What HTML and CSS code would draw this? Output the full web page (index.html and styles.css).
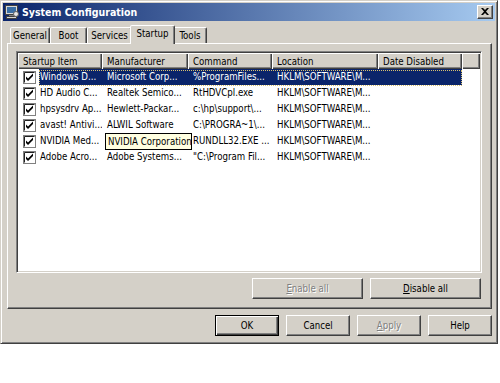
FILE: index.html
```html
<!DOCTYPE html>
<html lang="en">
<head>
  <meta charset="UTF-8" />
  <title>System Configuration</title>
  <link rel="stylesheet" href="styles.css">
</head>
<body>
  <!-- shared checkbox glyph -->
  <svg class="defs" width="0" height="0">
    <symbol id="chk" viewBox="0 0 13 13">
      <rect x="0.5" y="0.5" width="12" height="12" fill="#fff" stroke="#808080"/>
      <path d="M1.5 11.5V1.5H11.5" stroke="#202020" fill="none"/>
      <path d="M3 5.5l2 2 5-5v2.5l-5 5-2-2z" fill="#000"/>
    </symbol>
  </svg>

  <div class="window">
    <div class="titlebar">
      <svg class="app-icon" width="16" height="16" viewBox="0 0 16 16">
        <rect x="1.5" y="1.5" width="12" height="9" fill="#d8d8d8" stroke="#404040"/>
        <rect x="3" y="3" width="9" height="6" fill="#3a6ea5"/>
        <rect x="5" y="11" width="5" height="2" fill="#808080"/>
        <rect x="2.5" y="12.5" width="10" height="2" fill="#d8d8d8" stroke="#404040"/>
        <circle cx="12" cy="10" r="2.5" fill="#e8e8e8" stroke="#606060"/>
      </svg>
      <span class="title">System Configuration</span>
      <div class="close">
        <svg width="8" height="7" viewBox="0 0 8 7">
          <path d="M0 0h2l2 2 2-2h2L5 3.5 8 7H6L4 5 2 7H0l3-3.5z" fill="#000"/>
        </svg>
      </div>
    </div>

    <div class="body">
      <div class="tabs">
        <div class="tab w-general">General</div>
        <div class="tab w-boot">Boot</div>
        <div class="tab w-services">Services</div>
        <div class="tab active w-startup">Startup</div>
        <div class="tab w-tools">Tools</div>
      </div>

      <div class="panel">
        <div class="listview">
          <table>
            <colgroup>
              <col class="c1"><col class="c2"><col class="c3"><col class="c4"><col class="c5"><col>
            </colgroup>
            <thead>
              <tr>
                <th>Startup Item</th>
                <th>Manufacturer</th>
                <th>Command</th>
                <th>Location</th>
                <th>Date Disabled</th>
                <th></th>
              </tr>
            </thead>
            <tbody>
              <tr class="selected">
                <td class="item"><svg class="box"><use href="#chk"/></svg><span class="label">Windows D...</span></td>
                <td>Microsoft Corp...</td>
                <td>%ProgramFiles...</td>
                <td>HKLM\SOFTWARE\M...</td>
                <td></td>
                <td class="filler"></td>
              </tr>
              <tr>
                <td class="item"><svg class="box"><use href="#chk"/></svg><span class="label">HD Audio C...</span></td>
                <td>Realtek Semico...</td>
                <td>RtHDVCpl.exe</td>
                <td>HKLM\SOFTWARE\M...</td>
                <td></td>
                <td></td>
              </tr>
              <tr>
                <td class="item"><svg class="box"><use href="#chk"/></svg><span class="label">hpsysdrv Ap...</span></td>
                <td>Hewlett-Packar...</td>
                <td>c:\hp\support\...</td>
                <td>HKLM\SOFTWARE\M...</td>
                <td></td>
                <td></td>
              </tr>
              <tr>
                <td class="item"><svg class="box"><use href="#chk"/></svg><span class="label">avast! Antivi...</span></td>
                <td>ALWIL Software</td>
                <td>C:\PROGRA~1\...</td>
                <td>HKLM\SOFTWARE\M...</td>
                <td></td>
                <td></td>
              </tr>
              <tr>
                <td class="item"><svg class="box"><use href="#chk"/></svg><span class="label">NVIDIA Med...</span></td>
                <td></td>
                <td>RUNDLL32.EXE ...</td>
                <td>HKLM\SOFTWARE\M...</td>
                <td></td>
                <td></td>
              </tr>
              <tr>
                <td class="item"><svg class="box"><use href="#chk"/></svg><span class="label">Adobe Acro...</span></td>
                <td>Adobe Systems...</td>
                <td>"C:\Program Fil...</td>
                <td>HKLM\SOFTWARE\M...</td>
                <td></td>
                <td></td>
              </tr>
            </tbody>
          </table>

          <div class="focus-rect"></div>
          <div class="tooltip">NVIDIA Corporation</div>
        </div>

        <div class="panel-buttons">
          <button class="btn wide" disabled><u>E</u>nable all</button>
          <button class="btn wide"><u>D</u>isable all</button>
        </div>
      </div>

      <div class="dialog-buttons">
        <button class="btn default">OK</button>
        <button class="btn">Cancel</button>
        <button class="btn" disabled><u>A</u>pply</button>
        <button class="btn">Help</button>
      </div>
    </div>
  </div>
</body>
</html>
```

FILE: styles.css
```css
/* classic dialog look */
body {
  margin: 0;
  background: #fff;
  font-family: "DejaVu Sans Condensed", "DejaVu Sans", sans-serif;
  font-size: 9.6px;
  color: #000;
}
.defs {
  position: absolute;
}
.window {
  width: 498px;
  height: 344px;
  box-sizing: border-box;
  background: #d4d0c8;
  border: 1px solid;
  border-color: #d4d0c8 #404040 #404040 #d4d0c8;
  box-shadow: inset 1px 1px #fff, inset -1px -1px #808080;
  padding: 2px;
  display: flex;
  flex-direction: column;
}

/* title bar */
.titlebar {
  height: 18px;
  display: flex;
  align-items: center;
  padding: 0 2px 0 1px;
  background: linear-gradient(to right, #0a246a, #a6caf0);
  color: #fff;
  font-size: 10.5px;
  font-weight: bold;
}
.app-icon {
  margin-right: 2px;
}
.close {
  margin-left: auto;
  width: 16px;
  height: 14px;
  box-sizing: border-box;
  background: #d4d0c8;
  border: 1px solid;
  border-color: #fff #404040 #404040 #fff;
  box-shadow: inset -1px -1px #808080;
  display: flex;
  align-items: center;
  justify-content: center;
  padding: 0 1px 1px 0;
}

.body {
  flex: 1;
  padding: 4px 3px 5px 4px;
  display: flex;
  flex-direction: column;
}

/* tabs */
.tabs {
  height: 18px;
  display: flex;
  align-items: flex-end;
  padding-left: 3px;
  position: relative;
  z-index: 1;
}
.tab {
  height: 16px;
  box-sizing: border-box;
  border: 1px solid;
  border-bottom: none;
  border-color: #fff #404040 transparent #fff;
  box-shadow: inset -1px 0 #808080;
  border-radius: 2px 2px 0 0;
  text-align: center;
  line-height: 15px;
  background: #d4d0c8;
}
.tab.active {
  height: 19px;
  margin: 0 -2px -1px;
  line-height: 16px;
  position: relative;
  z-index: 2;
}
.w-general { width: 40px; }
.w-boot { width: 37px; }
.w-services { width: 45px; }
.w-startup { width: 45px; }
.w-tools { width: 34px; }

/* tab page */
.panel {
  height: 266px;
  box-sizing: border-box;
  border: 1px solid;
  border-color: #fff #404040 #404040 #fff;
  box-shadow: inset -1px -1px #808080;
  padding: 7px 9px 9px 8px;
  display: flex;
  flex-direction: column;
}
.listview {
  height: 222px;
  box-sizing: border-box;
  background: #fff;
  border: 1px solid;
  border-color: #808080 #fff #fff #808080;
  box-shadow: inset 1px 1px #404040, inset -1px -1px #d4d0c8;
  padding: 1px;
  position: relative;
  overflow: hidden;
}
table {
  width: 462px;
  table-layout: fixed;
  border-collapse: collapse;
  border-spacing: 0;
}
.c1 { width: 84px; }
.c2 { width: 86px; }
.c3 { width: 84px; }
.c4 { width: 106px; }
.c5 { width: 84px; }
th {
  height: 16px;
  padding: 0 0 0 5px;
  text-align: left;
  font-weight: normal;
  background: #d4d0c8;
  box-shadow: inset 1px 1px #fff, inset -1px -1px #404040, inset -2px -2px #808080;
  white-space: nowrap;
  overflow: hidden;
}
td {
  height: 16px;
  padding: 0 0 0 5px;
  white-space: nowrap;
  overflow: hidden;
  line-height: 16px;
}
td.item {
  display: flex;
  align-items: center;
}
.box {
  width: 13px;
  height: 13px;
  flex: none;
}
.label {
  flex: 1;
  margin-left: 3px;
  padding-left: 1px;
  height: 16px;
  overflow: hidden;
}
tr.selected td,
tr.selected .label {
  background: #0a246a;
  color: #fff;
}
tr.selected td.item,
tr.selected td.filler {
  background: none;
}
.focus-rect {
  position: absolute;
  left: 22px;
  top: 18px;
  width: 423px;
  height: 16px;
  box-sizing: border-box;
  border: 1px dotted #d8c070;
}
.tooltip {
  position: absolute;
  left: 88px;
  top: 81px;
  width: 87px;
  height: 17px;
  box-sizing: border-box;
  background: #ffffe1;
  border: 1px solid #000;
  padding-left: 2px;
  line-height: 15px;
  white-space: nowrap;
  overflow: hidden;
}

/* buttons */
.btn {
  width: 64px;
  height: 21px;
  box-sizing: border-box;
  padding: 0;
  background: #d4d0c8;
  border: 1px solid;
  border-color: #fff #404040 #404040 #fff;
  box-shadow: inset -1px -1px #808080;
  font-family: inherit;
  font-size: 9.6px;
  color: #000;
}
.btn.default {
  border-color: #000;
  box-shadow: inset 1px 1px #fff, inset -1px -1px #404040, inset -2px -2px #808080;
}
.btn:disabled {
  color: #808080;
  text-shadow: 1px 1px #fff;
}
.btn.wide {
  width: 111px;
}
.panel-buttons {
  margin-top: 5px;
  display: flex;
  justify-content: flex-end;
  gap: 7px;
  padding-right: 1px;
}
.dialog-buttons {
  margin-top: 6px;
  display: flex;
  justify-content: flex-end;
  gap: 7px;
}
```
